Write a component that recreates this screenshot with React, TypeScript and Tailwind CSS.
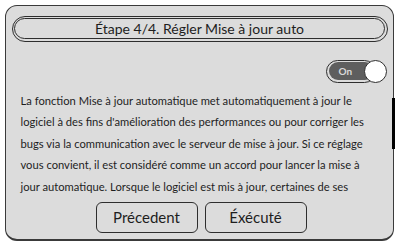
import React from "react";

const lines = [
  "La fonction Mise à jour automatique met automatiquement à jour le",
  "logiciel à des fins d'amélioration des performances ou pour corriger les",
  "bugs via la communication avec le serveur de mise à jour. Si ce réglage",
  "vous convient, il est considéré comme un accord pour lancer la mise à",
  "jour automatique. Lorsque le logiciel est mis à jour, certaines de ses",
];

export default function App() {
  return (
    <div className="h-[243px] w-[398px] bg-white pl-[5px] pt-[5px] font-['Lato','Open_Sans',sans-serif] text-[#1e1e1e]">
      <div className="relative flex h-[236px] w-[389px] flex-col rounded-[12px] border-[1.5px] border-b-[2.5px] border-[#3a3a3a] bg-[#dcdcdc] px-[5.5px] pt-[9.5px]">
        {/* Title */}
        <div className="h-[26px] rounded-full border-[1.5px] border-[#2e2e2e] p-[1.5px]">
          <div className="flex h-full items-center justify-center rounded-full border border-[#2e2e2e] text-[14px] leading-none">
            Étape 4/4. Régler Mise à jour auto
          </div>
        </div>

        {/* Toggle */}
        <div className="mt-[18px] flex justify-end pr-[0.5px]">
          <div className="relative h-[23px] w-[61px]">
            <div className="absolute left-0 top-0 h-[23px] w-[50px] rounded-full border-[1.5px] border-[#2e2e2e] bg-[#dcdcdc] p-[1.5px]">
              <div className="flex h-full items-center rounded-full bg-[#5e5e5e] pl-[10px] text-[10px] font-bold text-[#d8d8d8]">
                On
              </div>
            </div>
            <div className="absolute right-0 top-0 h-[23px] w-[23px] rounded-full border-[1.5px] border-[#2e2e2e] bg-white" />
          </div>
        </div>

        {/* Body text */}
        <div className="mt-[7px] h-[108px] overflow-hidden pl-[9px] text-[11.2px] leading-[21.5px]">
          {lines.map((l) => (
            <div key={l} className="whitespace-nowrap">
              {l}
            </div>
          ))}
        </div>

        {/* Scrollbar */}
        <div className="absolute right-[-2px] top-[92px] h-[51px] w-[3px] bg-black" />

        {/* Buttons */}
        <div className="mt-[4px] flex justify-center gap-[7px] pl-[3px]">
          <button className="h-[31px] w-[102px] rounded-[6px] border-[1.5px] border-[#2e2e2e] text-[15px]">
            Précedent
          </button>
          <button className="h-[31px] w-[102px] rounded-[6px] border-[1.5px] border-[#2e2e2e] text-[15px]">
            Éxécuté
          </button>
        </div>
      </div>
    </div>
  );
}
